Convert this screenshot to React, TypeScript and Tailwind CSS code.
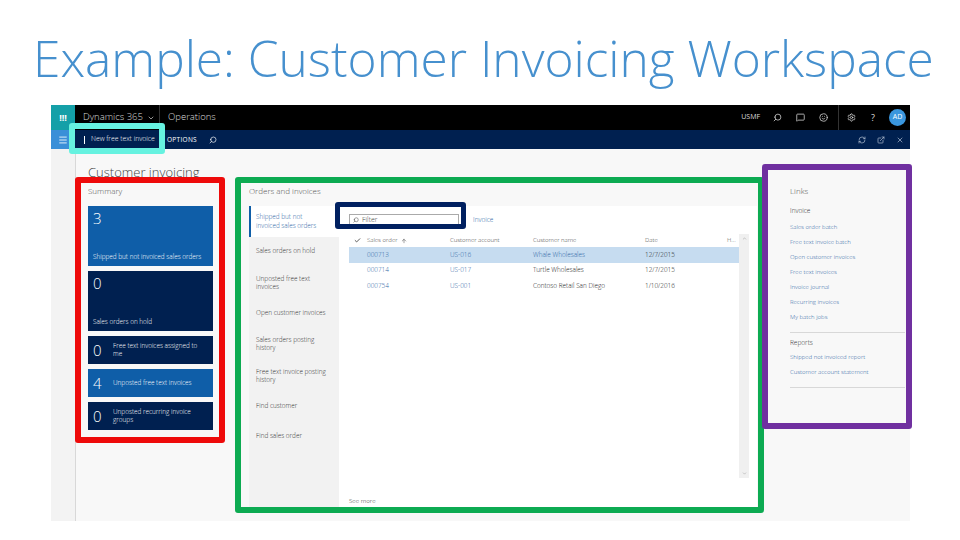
import { Search, MessageSquare, Smile, Settings, X, Menu, Check, ArrowUp, ChevronDown, RefreshCw, ExternalLink, ChevronUp } from 'lucide-react';

const TABS = [
  { label: 'Sales orders on hold', h: 'h-[29px]' },
  { label: 'Unposted free text invoices', h: 'h-[34px]' },
  { label: 'Open customer invoices', h: 'h-[26px]' },
  { label: 'Sales orders posting history', h: 'h-[36px]' },
  { label: 'Free text invoice posting history', h: 'h-[28px]' },
  { label: 'Find customer', h: 'h-[32px]' },
  { label: 'Find sales order', h: 'h-[28px]' },
];

const ROWS = [
  { id: '000713', acct: 'US-016', name: 'Whale Wholesales', date: '12/7/2015', selected: true },
  { id: '000714', acct: 'US-017', name: 'Turtle Wholesales', date: '12/7/2015', selected: false },
  { id: '000754', acct: 'US-001', name: 'Contoso Retail San Diego', date: '1/10/2016', selected: false },
];

const INVOICE_LINKS = [
  'Sales order batch',
  'Free text invoice batch',
  'Open customer invoices',
  'Free text invoices',
  'Invoice journal',
  'Recurring invoices',
  'My batch jobs',
];

const REPORT_LINKS = ['Shipped not invoiced report', 'Customer account statement'];

function BigTile({ count, label, color }: { count: string; label: string; color: string }) {
  return (
    <div className={`h-[60px] flex flex-col justify-between pl-[5px] pt-[1px] pb-[4px] text-white ${color}`}>
      <div className="text-[15px] leading-[22px] font-light">{count}</div>
      <div className="text-[6.4px] leading-[10px] font-light whitespace-nowrap">{label}</div>
    </div>
  );
}

function SmallTile({ count, label, color }: { count: string; label: string; color: string }) {
  return (
    <div className={`h-[28px] flex items-center pl-[5px] text-white ${color}`}>
      <div className="w-[20px] text-[15px] leading-none font-light">{count}</div>
      <div className="text-[6.4px] leading-[8.5px] font-light w-[95px]">{label}</div>
    </div>
  );
}

export default function App() {
  return (
    <div className="relative w-[960px] h-[540px] bg-white overflow-hidden font-['Open_Sans',sans-serif]">
      {/* Slide title */}
      <h1 className="h-[105px] pt-[25px] pl-[33px] text-[49.6px] leading-[66px] font-light text-[#4690ce] whitespace-nowrap">
        Example: Customer Invoicing Workspace
      </h1>

      {/* App screenshot */}
      <div className="ml-[51px] w-[859px] h-[416px] flex flex-col bg-[#f8f8f8]">
        <div className="h-[25px] flex items-center bg-black text-white shrink-0">
          <div className="w-[24px] h-full bg-[#14a0a8] flex items-center justify-center font-bold text-[9px]">!!!</div>
          <div className="flex items-center gap-[4px] w-[85px] h-full pl-[8px] border-r border-[#333333] text-[9.5px] font-light text-[#dddddd] whitespace-nowrap">
            Dynamics 365 <ChevronDown className="w-[8px] h-[8px]" />
          </div>
          <div className="pl-[8px] text-[9.5px] font-light text-[#dddddd]">Operations</div>
          <div className="ml-auto flex items-center h-full text-[#dddddd]">
            <span className="text-[7px] mr-[13px]">USMF</span>
            <Search className="w-[9px] h-[9px] mr-[14px] -scale-x-100" />
            <MessageSquare className="w-[9px] h-[9px] mr-[14px]" />
            <Smile className="w-[9px] h-[9px] mr-[10px]" />
            <div className="h-full border-l border-[#333333] mr-[8px]" />
            <Settings className="w-[9px] h-[9px] mr-[15px]" />
            <span className="text-[9px] mr-[14px]">?</span>
            <div className="w-[17px] h-[17px] mr-[4px] rounded-full bg-[#3a96dd] flex items-center justify-center text-[7px] text-white">AD</div>
          </div>
        </div>

        <div className="h-[19px] flex items-center bg-[#002050] text-white shrink-0">
          <div className="w-[24px] h-full bg-[#3a8fd8] flex items-center justify-center">
            <Menu className="w-[10px] h-[10px]" />
          </div>
          <span className="ml-[9px] mr-[6px] w-px h-[8px] bg-white" />
          <span className="text-[6.8px] font-light w-[76px] whitespace-nowrap">New free text invoice</span>
          <span className="text-[6.5px] tracking-[0.3px]">OPTIONS</span>
          <Search className="w-[8px] h-[8px] ml-[12px] -scale-x-100" />
          <div className="ml-auto flex items-center gap-[11px] pr-[6px] text-[#b8c4d6]">
            <RefreshCw className="w-[8px] h-[8px]" />
            <ExternalLink className="w-[8px] h-[8px]" />
            <X className="w-[8px] h-[8px]" />
          </div>
        </div>

        <div className="flex-1 flex min-h-0">
          {/* Left rail */}
          <div className="w-[25px] shrink-0 bg-[#f3f3f3] border-r border-[#d8d8d8]" />

          <div className="flex-1 flex flex-col pl-[12px] min-w-0">
            <div className="h-[42px] pt-[14px] text-[13px] leading-[18px] font-light text-[#444444]">Customer invoicing</div>

            <div className="flex-1 flex min-h-0">
              {/* Summary */}
              <div className="w-[125px] shrink-0 mt-[-7px]">
                <div className="h-[22px] pt-[1px] text-[8px] leading-[12px] font-light text-[#555555]">Summary</div>
                <div className="flex flex-col gap-[5px]">
                  <BigTile count="3" label="Shipped but not invoiced sales orders" color="bg-[#0f5ea8]" />
                  <BigTile count="0" label="Sales orders on hold" color="bg-[#002050]" />
                  <SmallTile count="0" label="Free text invoices assigned to me" color="bg-[#002050]" />
                  <SmallTile count="4" label="Unposted free text invoices" color="bg-[#0f5ea8]" />
                  <SmallTile count="0" label="Unposted recurring invoice groups" color="bg-[#002050]" />
                </div>
              </div>

              {/* Orders and invoices */}
              <div className="w-[508px] shrink-0 ml-[36px] mt-[-7px] flex flex-col">
                <div className="h-[22px] pt-[1px] text-[8px] leading-[12px] font-light text-[#555555]">Orders and invoices</div>
                <div className="h-[304px] flex">
                  <div className="w-[90px] shrink-0 bg-[#f2f2f2] text-[6.4px] leading-[8.5px] font-light text-[#333333]">
                    <div className="h-[31px] bg-white border-l-2 border-[#0f5ea8] pl-[5px] pr-[14px] flex items-center text-[#2f66a5]">
                      Shipped but not invoiced sales orders
                    </div>
                    {TABS.map((tab) => (
                      <div key={tab.label} className={`${tab.h} flex items-center pl-[7px] pr-[8px]`}>
                        {tab.label}
                      </div>
                    ))}
                  </div>

                  <div className="flex-1 bg-white flex flex-col pl-[10px] pr-[8px] min-w-0">
                    <div className="h-[28px] flex items-center shrink-0">
                      <div className="w-[110px] h-[13px] border border-[#aaaaaa] flex items-center pl-[3px] gap-[3px] text-[7px] font-light text-[#444444]">
                        <Search className="w-[6px] h-[6px] -scale-x-100" /> Filter
                      </div>
                      <span className="ml-[14px] text-[6.5px] font-light text-[#2f66a5]">Invoice</span>
                    </div>

                    <div className="flex-1 flex min-h-0">
                      <div className="flex-1 min-w-0 text-[6.4px] font-light text-[#222222]">
                        <div className="h-[13px] flex items-center text-[6px] text-[#444444]">
                          <div className="w-[18px] pl-[5px]"><Check className="w-[7px] h-[7px]" strokeWidth={3} /></div>
                          <div className="w-[83px] flex items-center gap-[3px]">Sales order <ArrowUp className="w-[6px] h-[6px]" /></div>
                          <div className="w-[83px]">Customer account</div>
                          <div className="w-[112px]">Customer name</div>
                          <div className="w-[82px]">Date</div>
                          <div>H...</div>
                        </div>
                        {ROWS.map((row) => (
                          <div key={row.id} className={`h-[15.5px] flex items-center ${row.selected ? 'bg-[#c6dcf0]' : ''}`}>
                            <div className="w-[18px]" />
                            <div className="w-[83px] text-[#2f66a5]">{row.id}</div>
                            <div className="w-[83px] text-[#2f66a5]">{row.acct}</div>
                            <div className={`w-[112px] ${row.selected ? 'text-[#2f66a5]' : ''}`}>{row.name}</div>
                            <div className="w-[82px]">{row.date}</div>
                          </div>
                        ))}
                      </div>
                      <div className="w-[10px] shrink-0 bg-[#f0f0f0] flex flex-col justify-between items-center py-[2px] mb-[18px] text-[#888888]">
                        <ChevronUp className="w-[5px] h-[5px]" />
                        <ChevronDown className="w-[5px] h-[5px]" />
                      </div>
                    </div>
                    <div className="h-[14px] shrink-0 text-[6.2px] font-light text-[#333333]">See more</div>
                  </div>
                </div>
              </div>

              {/* Links */}
              <div className="flex-1 ml-[33px] mt-[-7px] min-w-0 text-[6px] font-light text-[#2f66a5]">
                <div className="h-[22px] pt-[1px] text-[8px] leading-[12px] font-light text-[#555555]">Links</div>
                <div className="mr-[5px]">
                  <div className="h-[13px] mt-[-1px] text-[6.5px] leading-[12px] text-[#333333]">Invoice</div>
                  <div className="h-[2px]" />
                  {INVOICE_LINKS.map((link) => (
                    <div key={link} className="h-[15px] leading-[15px] whitespace-nowrap">{link}</div>
                  ))}
                  <div className="border-b border-[#d8d8d8] mt-[7px]" />
                  <div className="h-[13px] mt-[4px] text-[6.5px] leading-[12px] text-[#333333]">Reports</div>
                  {REPORT_LINKS.map((link) => (
                    <div key={link} className="h-[15px] leading-[15px] whitespace-nowrap">{link}</div>
                  ))}
                  <div className="border-b border-[#d8d8d8] mt-[7px]" />
                </div>
              </div>
            </div>
          </div>
        </div>
      </div>

      {/* Annotation boxes drawn over the screenshot */}
      <div className="absolute left-[69px] top-[123px] w-[96px] h-[31px] border-[6px] border-[#66f2e0] rounded-[3px]" />
      <div className="absolute left-[75px] top-[177px] w-[150px] h-[266px] border-[6px] border-[#ee0a0a] rounded-[3px]" />
      <div className="absolute left-[235px] top-[177px] w-[529px] h-[336px] border-[6px] border-[#0dab52] rounded-[3px]" />
      <div className="absolute left-[762px] top-[164px] w-[150px] h-[265px] border-[6px] border-[#7030a0] rounded-[3px]" />
      <div className="absolute left-[335px] top-[202px] w-[131px] h-[27px] border-[5px] border-[#002060] rounded-[3px]" />
    </div>
  );
}
